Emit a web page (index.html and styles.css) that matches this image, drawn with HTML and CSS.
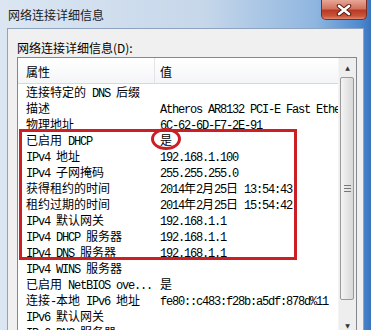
FILE: index.html
```html
<!DOCTYPE html>
<html>
<head>
	<meta charset="utf-8">
	<title>网络连接详细信息</title>
	<link rel="stylesheet" href="styles.css">
</head>
<body>
<div class="window">
	<div class="titlebar">
		<span class="title">网络连接详细信息</span>
		<div class="close">
			<svg width="16" height="12" viewBox="0 0 16 12">
				<path d="M3 2 L13 10 M13 2 L3 10" stroke="#5a1a10" stroke-width="4.5" stroke-linecap="round"/>
				<path d="M3 2 L13 10 M13 2 L3 10" stroke="#fff" stroke-width="2.6" stroke-linecap="round"/>
			</svg>
		</div>
	</div>
	<div class="client">
		<div class="label">网络连接详细信息(D):</div>
		<div class="listbox">
			<div class="table">
				<div class="head"><div class="c1">属性</div><div class="c2">值</div></div>
				<div class="row"><div class="c1">连接特定的<span class="en"> DNS </span>后缀</div><div class="c2"></div></div>
				<div class="row"><div class="c1">描述</div><div class="c2"><span class="en">Atheros AR8132 PCI-E Fast Ethernet Controller</span></div></div>
				<div class="row"><div class="c1">物理地址</div><div class="c2"><span class="en">6C-62-6D-F7-2E-91</span></div></div>
				<div class="row"><div class="c1">已启用<span class="en"> DHCP</span></div><div class="c2">是</div></div>
				<div class="row"><div class="c1"><span class="en">IPv4 </span>地址</div><div class="c2"><span class="en">192.168.1.100</span></div></div>
				<div class="row"><div class="c1"><span class="en">IPv4 </span>子网掩码</div><div class="c2"><span class="en">255.255.255.0</span></div></div>
				<div class="row"><div class="c1">获得租约的时间</div><div class="c2"><span class="en">2014</span>年<span class="en">2</span>月<span class="en">25</span>日<span class="en"> 13:54:43</span></div></div>
				<div class="row"><div class="c1">租约过期的时间</div><div class="c2"><span class="en">2014</span>年<span class="en">2</span>月<span class="en">25</span>日<span class="en"> 15:54:42</span></div></div>
				<div class="row"><div class="c1"><span class="en">IPv4 </span>默认网关</div><div class="c2"><span class="en">192.168.1.1</span></div></div>
				<div class="row"><div class="c1"><span class="en">IPv4 DHCP </span>服务器</div><div class="c2"><span class="en">192.168.1.1</span></div></div>
				<div class="row"><div class="c1"><span class="en">IPv4 DNS </span>服务器</div><div class="c2"><span class="en">192.168.1.1</span></div></div>
				<div class="row"><div class="c1"><span class="en">IPv4 WINS </span>服务器</div><div class="c2"></div></div>
				<div class="row"><div class="c1">已启用<span class="en"> NetBIOS ove...</span></div><div class="c2">是</div></div>
				<div class="row"><div class="c1">连接<span class="en">-</span>本地<span class="en"> IPv6 </span>地址</div><div class="c2"><span class="en">fe80::c483:f28b:a5df:878d%11</span></div></div>
				<div class="row"><div class="c1"><span class="en">IPv6 </span>默认网关</div><div class="c2"></div></div>
				<div class="row"><div class="c1"><span class="en">IPv6 DNS </span>服务器</div><div class="c2"></div></div>
			</div>
			<div class="scrollbar">
				<div class="arrow up">▲</div>
				<div class="thumb"><span class="grip"></span></div>
				<div class="track"></div>
				<div class="arrow down">▼</div>
			</div>
		</div>
	</div>
	<!-- red annotation marks -->
	<div class="mark-box"></div>
	<div class="mark-ring"></div>
</div>
</body>
</html>
```

FILE: styles.css
```css
body{
	margin: 0;
	width: 371px;
	height: 330px;
	overflow: hidden;
	font-family: "Noto Sans CJK SC", sans-serif;
	font-size: 12px;
	color: #000;
}
.window{
	position: relative;
	height: 330px;
	background: linear-gradient(90deg, #dbe6f2 0%, #c6d7ea 55%, #8fb6e0 85%, #4f8ad0 97%, #3a74bf 100%);
}
/*标题栏*/
.titlebar{
	height: 28px;
	display: flex;
	justify-content: space-between;
	align-items: flex-start;
}
.title{
	padding-left: 8px;
	line-height: 29px;
	color: #1b1b1b;
}
.close{
	width: 46px;
	height: 20px;
	margin-right: 4px;
	box-sizing: border-box;
	border: 1px solid #7a2d22;
	border-top: none;
	border-radius: 0 0 5px 5px;
	background: linear-gradient(#e7a796 0%, #d2735f 45%, #b93a22 55%, #c9553c 85%, #e08a6e 100%);
	display: flex;
	justify-content: center;
	align-items: center;
}
/*窗口内容*/
.client{
	height: 302px;
	margin: 0 7px 0 7px;
	box-sizing: border-box;
	border: 1px solid #8ea3bd;
	border-bottom: none;
	background: #f0f0f0;
	padding: 11px 6px 0 9px;
}
.label{
	line-height: 16px;
	height: 16px;
}
.listbox{
	margin-top: 1px;
	height: 278px;
	box-sizing: border-box;
	border: 1px solid #828790;
	border-bottom: none;
	background: #fff;
	display: flex;
}
.table{
	flex: 1;
	overflow: hidden;
}
.head{
	height: 26px;
	box-sizing: border-box;
	border-bottom: 1px solid #d8d8d8;
	background: linear-gradient(#ffffff, #f4f5f7);
	display: flex;
	padding-top: 2px;
	line-height: 23px;
}
.head .c1{
	width: 128px;
	padding-left: 8px;
	border-right: 1px solid #e2e4e7;
	margin-top: -2px;
	padding-top: 2px;
}
.head .c2{
	padding-left: 5px;
}
.row{
	display: flex;
	height: 16px;
	line-height: 16px;
	white-space: nowrap;
}
.row:first-of-type{
	margin-top: 0;
}
.row .c1{
	width: 129px;
	padding-left: 8px;
	overflow: hidden;
}
.row .c2{
	flex: 1;
	padding-left: 5px;
	overflow: hidden;
}
.en{
	font-family: "Liberation Mono", monospace;
	letter-spacing: -1.2px;
	white-space: pre;
}
/*滚动条*/
.scrollbar{
	width: 17px;
	background: #eeeeee;
	border-left: 1px solid #f4f4f4;
	display: flex;
	flex-direction: column;
}
.arrow{
	height: 19px;
	font-size: 6px;
	line-height: 19px;
	text-align: center;
	color: #333;
	font-family: "DejaVu Sans", sans-serif;
}
.thumb{
	height: 223px;
	margin: 0 2px 0 1px;
	box-sizing: border-box;
	border: 1px solid #999;
	border-radius: 2px;
	background: linear-gradient(90deg, #f4f4f4, #e6e6e6 50%, #d8d8d8);
	display: flex;
	justify-content: center;
	align-items: center;
}
.grip{
	width: 7px;
	height: 5px;
	border-top: 1px solid #777;
	border-bottom: 1px solid #777;
	position: relative;
}
.grip::after{
	content: "";
	position: absolute;
	left: 0;
	right: 0;
	top: 2px;
	border-top: 1px solid #777;
}
.track{
	flex: 1;
}
/*红色标注*/
.mark-box{
	position: absolute;
	left: 19px;
	top: 129px;
	width: 272px;
	height: 125px;
	border: 3px solid #cc1f24;
}
.mark-ring{
	position: absolute;
	left: 151px;
	top: 128px;
	width: 24px;
	height: 16px;
	border: 3px solid #cc1f24;
	border-radius: 50%;
}
```
